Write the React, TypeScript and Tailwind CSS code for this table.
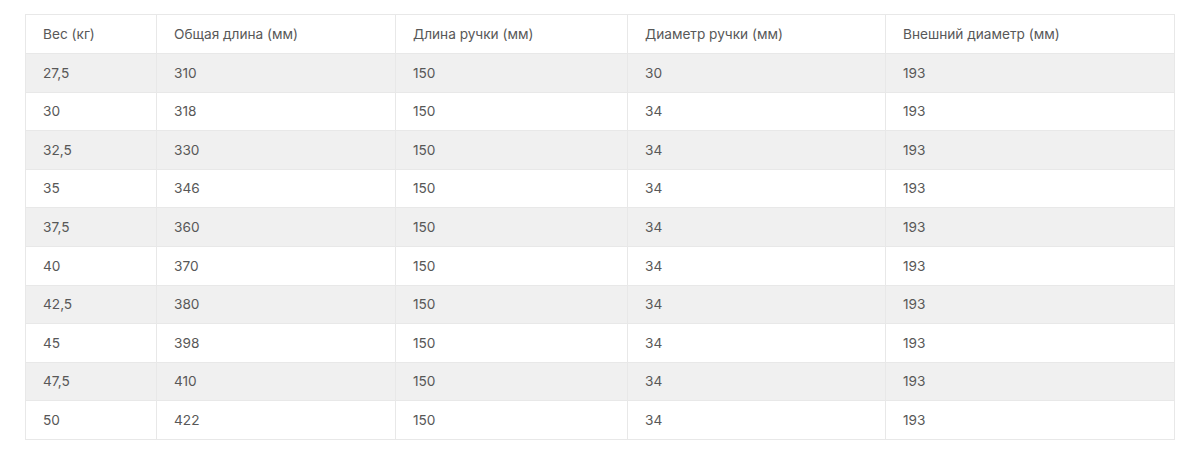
const headers = ['Вес (кг)', 'Общая длина (мм)', 'Длина ручки (мм)', 'Диаметр ручки (мм)', 'Внешний диаметр (мм)'];

const rows: string[][] = [
  ['27,5', '310', '150', '30', '193'],
  ['30', '318', '150', '34', '193'],
  ['32,5', '330', '150', '34', '193'],
  ['35', '346', '150', '34', '193'],
  ['37,5', '360', '150', '34', '193'],
  ['40', '370', '150', '34', '193'],
  ['42,5', '380', '150', '34', '193'],
  ['45', '398', '150', '34', '193'],
  ['47,5', '410', '150', '34', '193'],
  ['50', '422', '150', '34', '193'],
];

const colWidths = ['w-[131px]', 'w-[239px]', 'w-[232px]', 'w-[258px]', 'w-[289px]'];

export default function App() {
  return (
    <div className="bg-white w-[1200px] h-[461px] pt-[14px] pl-[25px] font-['Inter',sans-serif] text-[13.65px] text-[#585858]">
      <table className="border-collapse w-[1149px] table-fixed">
        <colgroup>
          {colWidths.map((w, i) => (
            <col key={i} className={w} />
          ))}
        </colgroup>
        <thead>
          <tr className="h-[39px]">
            {headers.map((h) => (
              <th key={h} className="border border-[#e8e8e8] px-[17px] text-left font-normal">
                {h}
              </th>
            ))}
          </tr>
        </thead>
        <tbody>
          {rows.map((r, i) => (
            <tr key={i} className={i % 2 === 0 ? 'h-[38.6px] bg-[#f0f0f0]' : 'h-[38.6px] bg-white'}>
              {r.map((c, j) => (
                <td key={j} className="border border-[#e8e8e8] px-[17px]">
                  {c}
                </td>
              ))}
            </tr>
          ))}
        </tbody>
      </table>
    </div>
  );
}
